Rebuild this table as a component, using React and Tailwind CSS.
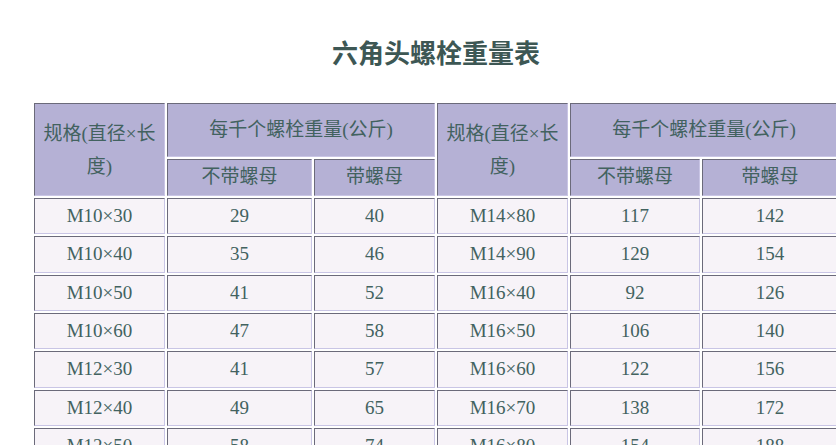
import React from 'react';

// 六角头螺栓重量表: two spec columns side by side, old-school bordered table look
const rows = [
  ['M10×30', '29', '40', 'M14×80', '117', '142'],
  ['M10×40', '35', '46', 'M14×90', '129', '154'],
  ['M10×50', '41', '52', 'M16×40', '92', '126'],
  ['M10×60', '47', '58', 'M16×50', '106', '140'],
  ['M12×30', '41', '57', 'M16×60', '122', '156'],
  ['M12×40', '49', '65', 'M16×70', '138', '172'],
  ['M12×50', '58', '74', 'M16×80', '154', '188'],
];

const cell = 'flex items-center justify-center text-center border-t border-l border-b border-r border-t-[#6b6a7a] border-l-[#6b6a7a] border-b-[#c9c5e5] border-r-[#c9c5e5]';
const head = `${cell} bg-[#b5b1d5]`;
const body = `${cell} bg-[#f7f3f8]`;

const App = () => {
  return (
    <div className="w-[836px] h-[445px] overflow-hidden bg-white text-[#42625f] font-['Liberation_Serif','Noto_Sans_CJK_SC',serif]">
      <div className="w-[804px] ml-[34px] pt-[37px]">
        <h1 className="text-center text-[26px] leading-[36px] font-bold text-[#3d5754] mb-[30px]">六角头螺栓重量表</h1>
        <div className="grid grid-cols-[131px_145px_121px_131px_130px_136px] grid-rows-[54px_37px] auto-rows-[36.33px] gap-[2px] text-[19px]">
          <div className={`${head} row-span-2 px-[4px] leading-[33px]`}>规格(直径×长度)</div>
          <div className={`${head} col-span-2`}>每千个螺栓重量(公斤)</div>
          <div className={`${head} row-span-2 px-[4px] leading-[33px]`}>规格(直径×长度)</div>
          <div className={`${head} col-span-2`}>每千个螺栓重量(公斤)</div>
          <div className={head}>不带螺母</div>
          <div className={head}>带螺母</div>
          <div className={head}>不带螺母</div>
          <div className={head}>带螺母</div>
          {rows.map((r, i) =>
            r.map((v, j) => (
              <div key={`${i}-${j}`} className={body}>{v}</div>
            ))
          )}
        </div>
      </div>
    </div>
  );
};

export default App;
